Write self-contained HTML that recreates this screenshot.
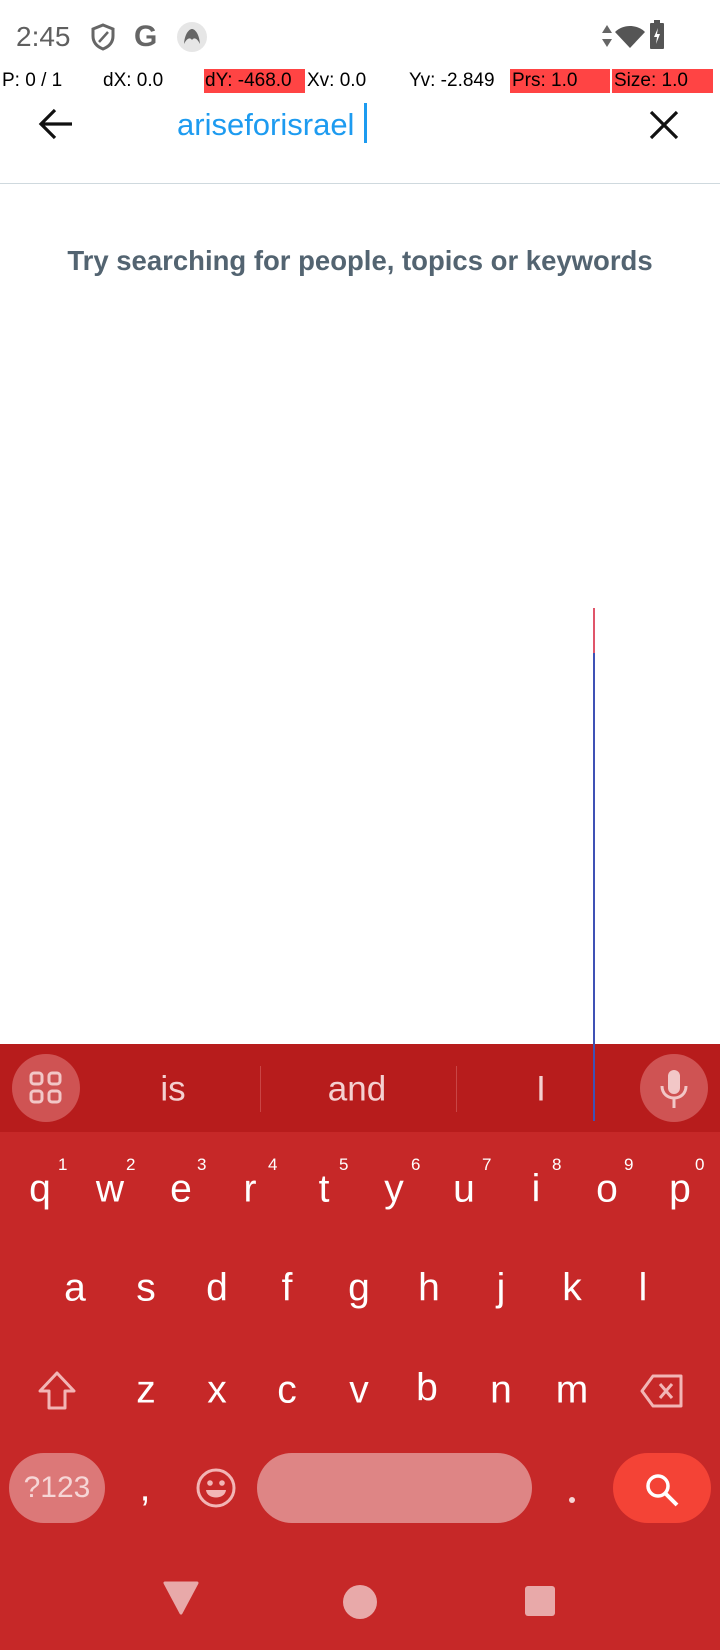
<!DOCTYPE html>
<html><head><meta charset="utf-8"><style>
*{margin:0;padding:0;box-sizing:border-box}
body{width:720px;height:1650px;position:relative;overflow:hidden;background:#fff;font-family:"Liberation Sans",sans-serif}
.a{position:absolute}
.k{position:absolute;color:#fff;font-size:39px;transform:translate(-50%,-50%);line-height:1}
.n{position:absolute;color:#fff;font-size:17px;line-height:1}
.dbg{position:absolute;top:69px;height:24px;font-size:19px;line-height:24px;color:#000;font-family:"Liberation Sans Narrow","Liberation Sans",sans-serif}
</style></head><body>
<!-- status bar -->
<div class="a" style="left:16px;top:21px;font-size:28px;color:#5f5f5f">2:45</div>
<svg class="a" style="left:90px;top:22px" width="26" height="30" viewBox="0 0 26 30"><path d="M13 3 L23 7 V14 C23 21 18 25 13 27 C8 25 3 21 3 14 V7 Z" fill="none" stroke="#666" stroke-width="3"/><path d="M9 20 L18 10" stroke="#666" stroke-width="2.5"/></svg>
<div class="a" style="left:134px;top:20px;font-size:30px;font-weight:bold;color:#666">G</div>
<div class="a" style="left:177px;top:22px;width:30px;height:30px;border-radius:50%;background:#e6e6e6"><svg width="30" height="30"><path d="M7 22 C8 10 13 7 15 7 C17 7 22 10 23 22 C20 16 17 15 15 18 C13 15 10 16 7 22Z" fill="#666"/></svg></div>
<svg class="a" style="left:601px;top:24px" width="12" height="24"><path d="M6 1 L11 9 H1Z M6 23 L1 15 H11Z" fill="#666"/></svg>
<svg class="a" style="left:614px;top:24px" width="32" height="26"><path d="M16 24 L1 8 C9 0 23 0 31 8Z" fill="#555"/></svg>
<svg class="a" style="left:649px;top:20px" width="16" height="30"><rect x="5" y="0" width="6" height="4" fill="#555"/><rect x="1" y="3" width="14" height="26" rx="1" fill="#555"/><path d="M9 8 L5 17 H8 L7 24 L11 14 H8Z" fill="#fff"/></svg>
<!-- debug row -->
<div class="dbg" style="left:2px">P: 0 / 1</div>
<div class="dbg" style="left:103px">dX: 0.0</div>
<div class="dbg" style="left:204px;width:101px;background:#ff4444;padding-left:1px">dY: -468.0</div>
<div class="dbg" style="left:307px">Xv: 0.0</div>
<div class="dbg" style="left:409px">Yv: -2.849</div>
<div class="dbg" style="left:510px;width:100px;background:#ff4444;padding-left:2px">Prs: 1.0</div>
<div class="dbg" style="left:612px;width:101px;background:#ff4444;padding-left:2px">Size: 1.0</div>
<!-- search row -->
<svg class="a" style="left:38px;top:107px" width="36" height="34" viewBox="0 0 36 34"><path d="M34 17 H4 M17 3 L3 17 L17 31" fill="none" stroke="#111" stroke-width="3.2"/></svg>
<div class="a" style="left:177px;top:107px;font-size:31px;color:#1d9bf0">ariseforisrael</div>
<div class="a" style="left:364px;top:103px;width:3px;height:40px;background:#1d9bf0"></div>
<svg class="a" style="left:648px;top:109px" width="32" height="32"><path d="M3 3 L29 29 M29 3 L3 29" stroke="#111" stroke-width="3.2"/></svg>
<div class="a" style="left:0;top:183px;width:720px;height:1px;background:#cfd9de"></div>
<div class="a" style="left:0;top:245px;width:720px;text-align:center;font-size:27.5px;font-weight:bold;color:#536471">Try searching for people, topics or keywords</div>
<!-- keyboard -->
<div class="a" style="left:0;top:1044px;width:720px;height:606px;background:#c62828"></div>
<div class="a" style="left:0;top:1044px;width:720px;height:88px;background:#b71c1c"></div>
<div class="a" style="left:12px;top:1054px;width:68px;height:68px;border-radius:50%;background:#cf5353"></div>
<svg class="a" style="left:29px;top:1071px" width="34" height="34"><g fill="none" stroke="#f2c7c7" stroke-width="3"><rect x="2" y="2" width="11" height="11" rx="3"/><rect x="20" y="2" width="11" height="11" rx="3"/><rect x="2" y="20" width="11" height="11" rx="3"/><rect x="20" y="20" width="11" height="11" rx="3"/></g></svg>
<div class="k" style="left:173px;top:1089px;font-size:35px;color:#f4d0d0">is</div>
<div class="a" style="left:260px;top:1066px;width:1px;height:46px;background:#c94545"></div>
<div class="k" style="left:357px;top:1089px;font-size:35px;color:#f4d0d0">and</div>
<div class="a" style="left:456px;top:1066px;width:1px;height:46px;background:#c94545"></div>
<div class="k" style="left:541px;top:1089px;font-size:35px;color:#f4d0d0">I</div>
<div class="a" style="left:640px;top:1054px;width:68px;height:68px;border-radius:50%;background:#cf5353"></div>
<svg class="a" style="left:656px;top:1068px" width="36" height="42"><rect x="12" y="2" width="12" height="24" rx="6" fill="#f2c7c7"/><path d="M6 18 C6 34 30 34 30 18 M18 30 V40" fill="none" stroke="#f2c7c7" stroke-width="3"/></svg>
<!-- row1 -->
<div class="k" style="left:40px;top:1189px">q</div><div class="n" style="left:58px;top:1156px">1</div>
<div class="k" style="left:110px;top:1189px">w</div><div class="n" style="left:126px;top:1156px">2</div>
<div class="k" style="left:181px;top:1189px">e</div><div class="n" style="left:197px;top:1156px">3</div>
<div class="k" style="left:250px;top:1189px">r</div><div class="n" style="left:268px;top:1156px">4</div>
<div class="k" style="left:324px;top:1189px">t</div><div class="n" style="left:339px;top:1156px">5</div>
<div class="k" style="left:394px;top:1189px">y</div><div class="n" style="left:411px;top:1156px">6</div>
<div class="k" style="left:464px;top:1189px">u</div><div class="n" style="left:482px;top:1156px">7</div>
<div class="k" style="left:536px;top:1189px">i</div><div class="n" style="left:552px;top:1156px">8</div>
<div class="k" style="left:607px;top:1189px">o</div><div class="n" style="left:624px;top:1156px">9</div>
<div class="k" style="left:680px;top:1189px">p</div><div class="n" style="left:695px;top:1156px">0</div>
<!-- row2 -->
<div class="k" style="left:75px;top:1288px">a</div>
<div class="k" style="left:146px;top:1288px">s</div>
<div class="k" style="left:217px;top:1288px">d</div>
<div class="k" style="left:287px;top:1288px">f</div>
<div class="k" style="left:359px;top:1288px">g</div>
<div class="k" style="left:429px;top:1288px">h</div>
<div class="k" style="left:501px;top:1288px">j</div>
<div class="k" style="left:572px;top:1288px">k</div>
<div class="k" style="left:643px;top:1288px">l</div>
<!-- row3 -->
<svg class="a" style="left:37px;top:1370px" width="40" height="42"><path d="M20 3 L37 21 H28 V38 H12 V21 H3Z" fill="none" stroke="#f2b5b5" stroke-width="3" stroke-linejoin="round"/></svg>
<div class="k" style="left:146px;top:1390px">z</div>
<div class="k" style="left:217px;top:1390px">x</div>
<div class="k" style="left:287px;top:1390px">c</div>
<div class="k" style="left:359px;top:1390px">v</div>
<div class="k" style="left:427px;top:1388px">b</div>
<div class="k" style="left:501px;top:1390px">n</div>
<div class="k" style="left:572px;top:1390px">m</div>
<svg class="a" style="left:639px;top:1373px" width="46" height="36"><path d="M14 3 H42 V33 H14 L3 18Z" fill="none" stroke="#f2b5b5" stroke-width="3" stroke-linejoin="round"/><path d="M21 11 L33 25 M33 11 L21 25" stroke="#f2b5b5" stroke-width="3"/></svg>
<!-- row4 -->
<div class="a" style="left:9px;top:1453px;width:96px;height:70px;border-radius:35px;background:#dc7878;color:#f6d6d6;font-size:30px;text-align:center;line-height:70px">?123</div>
<div class="k" style="left:145px;top:1488px">,</div>
<svg class="a" style="left:195px;top:1467px" width="42" height="42"><circle cx="21" cy="21" r="18" fill="none" stroke="#f2b5b5" stroke-width="3"/><circle cx="15" cy="16" r="2.8" fill="#f2b5b5"/><circle cx="27" cy="16" r="2.8" fill="#f2b5b5"/><path d="M11 23 H31 C30 33 12 33 11 23Z" fill="#f2b5b5"/></svg>
<div class="a" style="left:257px;top:1453px;width:275px;height:70px;border-radius:35px;background:#de8585"></div>
<div class="a" style="left:569px;top:1497px;width:6px;height:6px;border-radius:50%;background:#f6d6d6"></div>
<div class="a" style="left:613px;top:1453px;width:98px;height:70px;border-radius:35px;background:#f44336"></div>
<svg class="a" style="left:643px;top:1471px" width="40" height="40"><circle cx="15" cy="15" r="10" fill="none" stroke="#fff" stroke-width="3.5"/><path d="M22 22 L34 34" stroke="#fff" stroke-width="4"/></svg>
<!-- nav -->
<svg class="a" style="left:162px;top:1580px" width="38" height="36"><path d="M3 3 H35 L19 33Z" fill="#e8a9a9" stroke="#e8a9a9" stroke-width="3" stroke-linejoin="round"/></svg>
<div class="a" style="left:343px;top:1585px;width:34px;height:34px;border-radius:50%;background:#e8a9a9"></div>
<div class="a" style="left:525px;top:1586px;width:30px;height:30px;border-radius:3px;background:#e8a9a9"></div>
<!-- debug line -->
<div class="a" style="left:593px;top:608px;width:2px;height:45px;background:#e0556a"></div>
<div class="a" style="left:593px;top:653px;width:2px;height:468px;background:#3f51b5"></div>
</body></html>
